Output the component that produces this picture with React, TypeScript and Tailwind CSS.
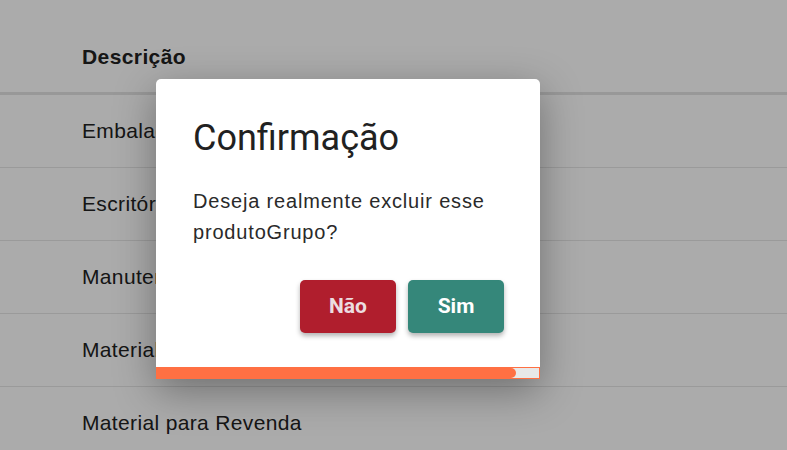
const rows = ['Embalagem', 'Escritório', 'Manutenção', 'Material de Consumo', 'Material para Revenda'];

export default function App() {
  return (
    <div className="relative h-[450px] w-[787px] overflow-hidden bg-white font-['Liberation_Sans',Arial,sans-serif] text-[#222]">
      <div className="pt-[18px]">
        <div className="flex h-[77px] items-center border-b-[3px] border-[#e3e3e3] pl-[82px] pt-[3px] text-[21px] font-bold tracking-[0.4px]">
          Descrição
        </div>
        {rows.map((r) => (
          <div key={r} className="flex h-[73px] items-center border-b border-[#e6e6e6] pl-[82px] text-[21px] tracking-[0.35px]">
            {r}
          </div>
        ))}
      </div>

      <div className="absolute inset-0 bg-black/[0.33]" />

      <div className="absolute left-[156px] top-[79px] flex h-[300px] w-[384px] flex-col overflow-hidden rounded-t-[5px] bg-white shadow-[0_12px_40px_rgba(0,0,0,0.35)]">
        <div className="px-[37px] pt-[35px]">
          <h2 className="font-['Roboto',sans-serif] text-[36px] leading-[48px] text-[#212121]">Confirmação</h2>
          <p className="mt-[24px] text-[20px] leading-[31px] tracking-[0.82px] text-[#2a2a2a]">
            Deseja realmente excluir esse produtoGrupo?
          </p>
        </div>
        <div className="mt-[32px] flex justify-end gap-[12px] pr-[36px] font-['Roboto',sans-serif]">
          <button className="h-[53px] w-[96px] rounded-[5px] bg-[#b01e2d] text-[21px] font-bold text-[#ecdde0] shadow-[0_3px_5px_rgba(0,0,0,0.3)]">
            Não
          </button>
          <button className="h-[53px] w-[96px] rounded-[5px] bg-[#35877a] text-[21px] font-bold text-white shadow-[0_3px_5px_rgba(0,0,0,0.3)]">
            Sim
          </button>
        </div>
        <div className="mt-auto h-[12px] border border-[#ff7043] bg-[#e8e8e8]">
          <div className="h-full w-[94%] rounded-r-full bg-[#ff7043]" />
        </div>
      </div>
    </div>
  );
}
